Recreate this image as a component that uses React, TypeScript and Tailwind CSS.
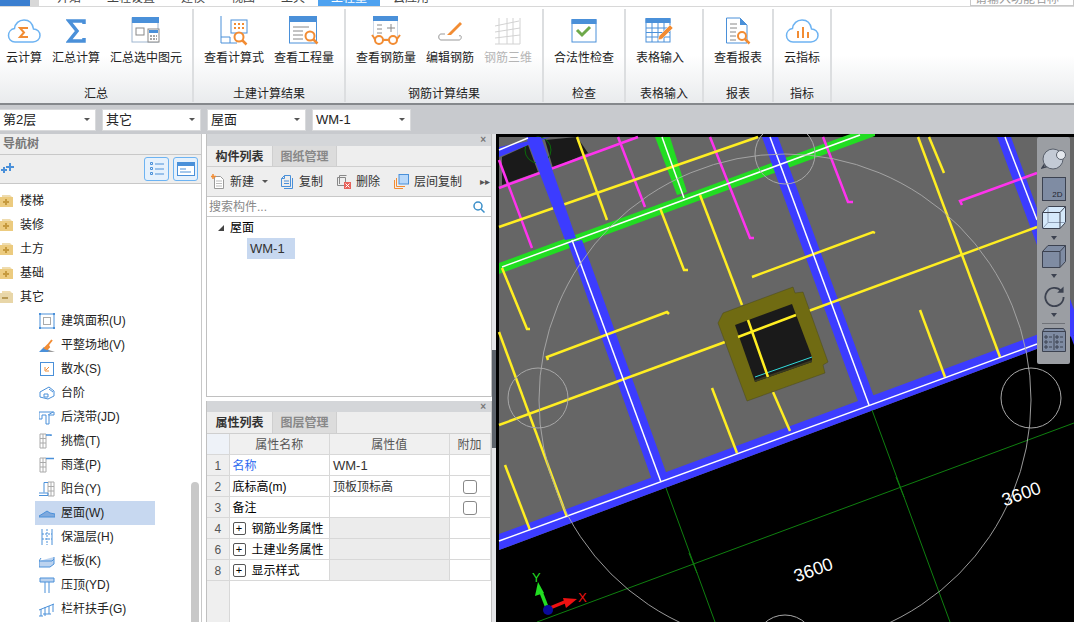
import type { ReactNode } from 'react';

const BLUE = '#4a90d9';
const ORANGE = '#f28c33';
const SKY = '#6db3f2';

function CloudShape({ children }: { children: ReactNode }) {
  return (
    <svg width="34" height="26" viewBox="0 0 34 26" fill="none">
      <path d="M8 24h18c4 0 7-3 7-6.500 0-4-3-6.500-6.500-6.500C25.500 5 21.500 2 17 2c-5 0-9 3.500-9.500 8.500C4 11 1.500 14 1.500 17.500 1.500 21 4 24 8 24z" stroke={SKY} strokeWidth="1.5" />
      {children}
    </svg>
  );
}

const ribbonIcons: Record<string, ReactNode> = {
  cloudSum: (
    <CloudShape>
      <path d="M21 10h-8l4 4.500-4 4.500h8" stroke={ORANGE} strokeWidth="2" />
    </CloudShape>
  ),
  sum: (
    <svg width="20" height="24" viewBox="0 0 20 24" fill="none">
      <path d="M18 5V2H3l8 10-8 10h15v-3" stroke={BLUE} strokeWidth="3.500" />
    </svg>
  ),
  sumSelected: (
    <svg width="30" height="28" viewBox="0 0 30 28" fill="none">
      <rect x="1" y="1" width="26" height="24" fill="#fff" stroke="#9fb6d0" />
      <rect x="1" y="0" width="27" height="6" fill={BLUE} />
      <rect x="5" y="11" width="8" height="7" stroke="#888" />
      <rect x="17" y="12" width="11" height="13" fill="#fff" stroke="#888" />
      <rect x="18" y="13" width="9" height="3" fill={BLUE} />
      <path d="M19 19h7M19 22h7" stroke="#888" strokeWidth="1.500" strokeDasharray="2 1" />
    </svg>
  ),
  formula: (
    <svg width="28" height="30" viewBox="0 0 28 30" fill="none">
      <path d="M1 0v27h16M1 21h9v6" stroke={BLUE} />
      <rect x="11" y="4" width="16" height="13" fill="#fff" stroke={BLUE} />
      <path d="M14 8h2M18 8h2M22 8h2M14 12h2M18 12h2M22 12h2" stroke={ORANGE} strokeWidth="2" />
      <circle cx="19" cy="21" r="4.500" fill="#fff" stroke={ORANGE} strokeWidth="2" />
      <path d="M22 24l4.500 4.500" stroke={ORANGE} strokeWidth="2.500" />
    </svg>
  ),
  quantity: (
    <svg width="30" height="30" viewBox="0 0 30 30" fill="none">
      <rect x="0.500" y="1" width="27" height="26" fill="#fff" stroke={BLUE} />
      <rect x="0" y="0" width="28" height="6" fill={BLUE} />
      <path d="M4 11h16M4 15h10M4 19h10M4 23h10" stroke="#888" />
      <circle cx="21" cy="20" r="4.500" fill="#fff" stroke={ORANGE} strokeWidth="2" />
      <path d="M24 23l4.500 4.500" stroke={ORANGE} strokeWidth="2.500" />
    </svg>
  ),
  rebarView: (
    <svg width="30" height="30" viewBox="0 0 30 30" fill="none">
      <rect x="2.500" y="1" width="24" height="22" fill="#fff" stroke="#cfd9e6" />
      <rect x="2" y="0" width="25" height="5" fill={BLUE} />
      <path d="M6 9h5M6 13h5M6 17h5M16 12h8M20 8v8" stroke="#888" />
      <circle cx="8" cy="24" r="4" fill="#fff" stroke={ORANGE} strokeWidth="2" />
      <circle cx="22" cy="24" r="4" fill="#fff" stroke={ORANGE} strokeWidth="2" />
      <path d="M12 24h6M4 23L1 19M26 23l3-4" stroke={ORANGE} strokeWidth="2" />
    </svg>
  ),
  rebarEdit: (
    <svg width="26" height="26" viewBox="0 0 26 26" fill="none">
      <path d="M8 16H4c-3 0-3 6 0 6h18c3 0 3-6 0-4" stroke="#999" />
      <path d="M10 17l13-13 2 2-11 11z" fill={ORANGE} />
    </svg>
  ),
  rebar3d: (
    <svg width="28" height="28" viewBox="0 0 28 28" fill="none" stroke="#d2d2d2">
      <path d="M5 1v26M13 1v26M26 1v26M19 1v26M1 9l24-5M1 15l25-4M1 21l25-3M1 27h25" />
    </svg>
  ),
  check: (
    <svg width="26" height="24" viewBox="0 0 26 24" fill="none">
      <rect x="1" y="1" width="24" height="22" fill="#fff" stroke={BLUE} />
      <rect x="0.500" y="0" width="25" height="5" fill={BLUE} />
      <path d="M4 11l5 5 8-8" stroke="#6ea94a" strokeWidth="3" transform="translate(2 0)" />
    </svg>
  ),
  table: (
    <svg width="30" height="26" viewBox="0 0 30 26" fill="none">
      <rect x="1" y="1" width="24" height="23" fill="#fff" stroke={BLUE} />
      <rect x="0.500" y="0" width="25" height="5" fill={BLUE} />
      <path d="M1 10h24M1 14.500h24M1 19h24M7 5v19M13 5v19M19 5v19" stroke={BLUE} />
      <path d="M13 22l1-4L25 7l3 3-11 11z" fill={ORANGE} stroke="#fff" strokeWidth="0.500" />
    </svg>
  ),
  report: (
    <svg width="26" height="28" viewBox="0 0 26 28" fill="none">
      <path d="M1.500 1H15l7 7v18H1.500z" fill="#fff" stroke={BLUE} />
      <path d="M15 1v7h7z" fill={BLUE} />
      <path d="M5 7h7M5 11h7M5 15h6M5 19h6M5 23h6" stroke="#888" />
      <circle cx="17" cy="19" r="4" fill="#fff" stroke={ORANGE} strokeWidth="2" />
      <path d="M20 22l4.500 4.500" stroke={ORANGE} strokeWidth="2.500" />
    </svg>
  ),
  cloudIndex: (
    <CloudShape>
      <path d="M13 13v7M18 9v11M23 14v6" stroke={ORANGE} strokeWidth="2" />
    </CloudShape>
  ),
};

const groups = [
  { label: '汇总', width: 'w-[194px]', pad: 'px-[1px]', buttons: [['云计算', 'cloudSum'], ['汇总计算', 'sum'], ['汇总选中图元', 'sumSelected']] },
  { label: '土建计算结果', width: 'w-[152px]', pad: 'px-[5px]', buttons: [['查看计算式', 'formula'], ['查看工程量', 'quantity']] },
  { label: '钢筋计算结果', width: 'w-[198px]', pad: 'px-[5px]', buttons: [['查看钢筋量', 'rebarView'], ['编辑钢筋', 'rebarEdit'], ['钢筋三维', 'rebar3d']] },
  { label: '检查', width: 'w-[82px]', pad: 'px-[5px]', buttons: [['合法性检查', 'check']] },
  { label: '表格输入', width: 'w-[78px]', pad: 'px-[5px]', buttons: [['表格输入', 'table']] },
  { label: '报表', width: 'w-[70px]', pad: 'px-[5px]', buttons: [['查看报表', 'report']] },
  { label: '指标', width: 'w-[58px]', pad: 'px-[5px]', buttons: [['云指标', 'cloudIndex']] },
];

const tabs = ['开始', '工程设置', '建模', '视图', '工具', '工程量', '云应用'];

function TopTabs() {
  return (
    <div className="flex h-[7px] shrink-0 items-end overflow-hidden border-b border-[#d8d8d8] bg-white text-xs leading-4 text-[#444]">
      <div className="mr-[5px] flex h-[6px] w-[39px] shrink-0">
        <div className="h-full w-[30px] bg-[#3b7fd0]" />
        <div className="h-full w-[9px] bg-[#d8d8d8]" />
      </div>
      {tabs.map((tab) => (
        <div key={tab} className={tab === '工程量' ? 'bg-[#4ea2f0] px-[13px] text-white' : 'px-[13px]'}>
          {tab}
        </div>
      ))}
      <div className="ml-auto h-4 w-[104px] border border-[#c8c8c8] pl-1 text-[#999]">请输入功能名称</div>
    </div>
  );
}

function Ribbon() {
  return (
    <div className="flex h-[98px] shrink-0 border-b-2 border-[#85888c] bg-gradient-to-b from-white from-50% to-[#e9ebed] pt-[2px]">
      {groups.map((group) => (
        <div key={group.label} className={`${group.width} mb-px flex shrink-0 flex-col border-r-2 border-[#dcdee0]`}>
          <div className={`flex ${group.pad}`}>
            {group.buttons.map(([label, icon]) => (
              <div key={label} className={`flex flex-col items-center px-[5px] ${label === '钢筋三维' ? 'text-[#b5b5b5]' : ''}`}>
                <div className="flex h-[38px] w-full items-center justify-center pt-[5px]">{ribbonIcons[icon]}</div>
                <div className="mt-px text-xs leading-5 whitespace-nowrap">{label}</div>
              </div>
            ))}
          </div>
          <div className="mt-auto text-center text-xs leading-4">{group.label}</div>
        </div>
      ))}
    </div>
  );
}

function SelectorBar() {
  const selects = [
    { text: '第2层', cls: 'w-[97px] -ml-px' },
    { text: '其它', cls: 'w-[99px]' },
    { text: '屋面', cls: 'w-[99px]' },
    { text: 'WM-1', cls: 'w-[99px]' },
  ];
  return (
    <div className="flex h-[29px] shrink-0 items-center gap-[6px] bg-[#c8cace]">
      {selects.map((s) => (
        <div key={s.text} className={`${s.cls} flex h-[22px] items-center justify-between border border-[#d9dadc] bg-white pr-[5px] pl-[3px] text-[13px] text-[#222]`}>
          <span>{s.text}</span>
          <span className="h-0 w-0 border-x-[3px] border-t-[3px] border-x-transparent border-t-[#555]" />
        </div>
      ))}
    </div>
  );
}

const S = (p: { children: ReactNode }) => (
  <svg width="16" height="16" viewBox="0 0 16 16" fill="none">{p.children}</svg>
);

const treeIcons: Record<string, ReactNode> = {
  area: <S><rect x="1" y="1" width="14" height="14" stroke={BLUE} /><rect x="4.500" y="4.500" width="7" height="7" stroke="#aaa" /><path d="M0 0h2v2H0zM14 0h2v2h-2zM0 14h2v2H0zM14 14h2v2h-2z" fill={BLUE} /></S>,
  site: <S><path d="M0 15l5-5 5 3 1 2z" fill={BLUE} /><path d="M10 13l6 2H9z" fill="#999" /><path d="M6 11l3-3 1 2-2 2zM9 8l4-5" stroke={ORANGE} strokeWidth="2" /></S>,
  apron: <S><rect x="1.500" y="1.500" width="13" height="13" stroke={BLUE} /><path d="M10 6l-3 3M6 6v4h4" stroke={ORANGE} /></S>,
  steps: <S><path d="M1 7l9-5 5 4v5l-6 3-8-2z" stroke={BLUE} /><path d="M5 9h4v3H5zM10 4l4 3" stroke={BLUE} /></S>,
  pour: <S><path d="M0 3h15v3H10v9H7V6H3v4H0zM9 6l5-3" stroke={BLUE} /></S>,
  eave: <S><path d="M1 1h6v14H1zM1 5.500h6M1 10h6M4 1v14" stroke="#aaa" /><path d="M7 2h5v1" stroke={BLUE} strokeWidth="1.500" /></S>,
  canopy: <S><path d="M1 1h6v14H1zM1 5.500h6M1 10h6M4 1v14" stroke="#aaa" /><path d="M7 1.500h8" stroke={BLUE} strokeWidth="1.500" /></S>,
  balcony: <S><path d="M9 1h6v14H9zM9 5.500h6M9 10h6M12 1v14" stroke="#aaa" /><path d="M9 1.500H5v10M0 12h9v2.500H0" stroke={BLUE} /></S>,
  roof: <S><path d="M0 11l5-3 3-2 3 2 5 1v3H0z" fill="#7fa9dd" stroke={BLUE} /></S>,
  insulation: <S><path d="M3 0v16M13 0v16" stroke={BLUE} /><path d="M8 0v16M3 5h10M3 10h10" stroke={BLUE} strokeDasharray="2 1" /></S>,
  parapet: <S><path d="M0 8h13l2-2v-2M0 8v6h11l4-3V6M0 8l2-3" stroke={BLUE} fill="#bcd3ef" /></S>,
  coping: <S><path d="M1 1h14v4H1z" fill="#bcd3ef" stroke={BLUE} /><path d="M6 5v11M10 5v11" stroke={BLUE} /></S>,
  railing: <S><path d="M0 9l15-6M2 8v7M6 6v9M10 5v8M14 3v8M0 15h4M4 13h8" stroke={BLUE} /></S>,
};

const folders = ['楼梯', '装修', '土方', '基础', '其它'];
const items = [
  ['建筑面积(U)', 'area'], ['平整场地(V)', 'site'], ['散水(S)', 'apron'], ['台阶', 'steps'], ['后浇带(JD)', 'pour'],
  ['挑檐(T)', 'eave'], ['雨蓬(P)', 'canopy'], ['阳台(Y)', 'balcony'], ['屋面(W)', 'roof'], ['保温层(H)', 'insulation'],
  ['栏板(K)', 'parapet'], ['压顶(YD)', 'coping'], ['栏杆扶手(G)', 'railing'],
];

function Folder({ open }: { open: boolean }) {
  return (
    <svg width="15" height="14" viewBox="0 0 15 14" className="-ml-px shrink-0">
      <path d="M3 1h8l2 2H3z" fill="#efdcae" />
      <path d="M0 3h14v10H0z" fill={open ? '#e8d6a8' : '#eccb7f'} />
      {open ? <path d="M3 8h6" stroke="#b89a55" strokeWidth="2" /> : <path d="M4 8h6M7 5v6" stroke="#c69a3e" strokeWidth="2" />}
    </svg>
  );
}

function NavTree() {
  return (
    <div className="relative flex h-full w-[202px] shrink-0 flex-col border-r border-[#c8c8c8] bg-white">
      <div className="flex h-[21px] shrink-0 items-center border-b border-[#c8c8c8] bg-[#eeeeee] pl-[3px] text-xs font-bold text-[#777]">导航树</div>
      <div className="flex h-[29px] shrink-0 items-center justify-between border-b border-[#c8c8c8] bg-[#eeeeee] pr-[3px] pl-px">
        <svg width="13" height="12" viewBox="0 0 13 12"><path d="M8 0h2v3h3v2h-3v3H8V5H5V3h3zM2 4h2v2h2v2H4v2H2V8H0V6h2z" fill={BLUE} /></svg>
        <div className="flex gap-[4px]">
          <div className="flex h-6 w-[25px] items-center justify-center rounded-[3px] border border-[#6db3f2] bg-[#e6f1fc]">
            <svg width="14" height="14" viewBox="0 0 14 14" fill="none" stroke={BLUE}><path d="M5 2h9M5 7h9M5 12h9M0.500 0.500h2v2h-2zM0.500 5.500h2v2h-2zM0.500 10.500h2v2h-2z" /></svg>
          </div>
          <div className="flex h-6 w-[25px] items-center justify-center rounded-[3px] border border-[#6db3f2] bg-[#e6f1fc]">
            <svg width="18" height="14" viewBox="0 0 18 14" fill="none"><rect x="0.500" y="0.500" width="17" height="13" fill="#fff" stroke={BLUE} /><rect width="18" height="4" fill={BLUE} /><path d="M3 7h6M3 10h11" stroke={BLUE} /></svg>
          </div>
        </div>
      </div>
      <div className="flex-1 overflow-hidden pt-[5px] text-xs text-[#222]">
        {folders.map((f) => (
          <div key={f} className="flex h-6 items-center gap-[6px]">
            <Folder open={f === '其它'} />
            <span>{f}</span>
          </div>
        ))}
        {items.map(([label, icon]) => (
          <div key={label} className={`ml-[35px] flex h-6 w-[120px] items-center gap-[6px] pl-[4px] ${label === '屋面(W)' ? 'bg-[#c7d8f0]' : ''}`}>
            {treeIcons[icon]}
            <span className="whitespace-nowrap">{label}</span>
          </div>
        ))}
      </div>
      <div className="absolute top-[348px] right-[2px] bottom-0 w-2 rounded-t bg-[#c8c8c8]" />
    </div>
  );
}

function PanelTabs({ active, other, titleH, tabH }: { active: string; other: string; titleH: string; tabH: string }) {
  return (
    <>
      <div className={`flex ${titleH} shrink-0 items-center justify-end bg-[#d4d6d9] pr-[5px] text-[10px] leading-none font-bold text-[#777]`}>×</div>
      <div className={`flex ${tabH} shrink-0 border-b border-[#cfcfcf] bg-[#eeeeee] text-xs`}>
        <div className="flex w-[65px] items-center justify-center pt-px font-bold text-[#333]">{active}</div>
        <div className="flex w-[65px] items-center justify-center border-x border-[#cfcfcf] bg-[#dcdcdc] pt-px font-bold text-[#888]">{other}</div>
      </div>
    </>
  );
}

function ComponentList() {
  return (
    <div className="flex h-[263px] shrink-0 flex-col border-x border-b border-[#c0c0c0] bg-white text-xs text-[#333]">
      <PanelTabs active="构件列表" other="图纸管理" titleH="h-[12px]" tabH="h-[21px]" />
      <div className="flex h-[30px] shrink-0 items-center border-b border-[#c8c8c8] bg-[#eeeeee] pl-[4px]">
        <svg width="14" height="15" viewBox="0 0 14 15" fill="none"><path d="M3.500 2.500h6l3 3v9h-9z" fill="#fff" stroke="#999" /><path d="M5 7h6M5 9.500h6M5 12h6" stroke="#bbb" /><path d="M2 0v5M0 2.500h5" stroke={ORANGE} strokeWidth="1.500" /></svg>
        <span className="ml-[5px] pt-px">新建</span>
        <span className="mx-[8px] h-0 w-0 border-x-[3px] border-t-[3px] border-x-transparent border-t-[#555]" />
        <svg width="12" height="14" viewBox="0 0 12 14" fill="none" className="ml-[5px]"><path d="M3.500 0.500h6v11h-9v-8zM0.500 3.500h3v-3" stroke={BLUE} /><path d="M3 6h5M3 8.500h5" stroke={BLUE} /><path d="M3 13.500h8.500V3" stroke={BLUE} /></svg>
        <span className="ml-[6px] pt-px">复制</span>
        <svg width="14" height="14" viewBox="0 0 14 14" fill="none" className="ml-[14px]"><path d="M2.500 9V0.500h7M0.500 2.500h8v8h-8z" stroke="#888" /><rect x="7" y="7" width="7" height="7" fill="#e8625a" /><path d="M8.500 8.500l4 4M12.500 8.500l-4 4" stroke="#fff" /></svg>
        <span className="ml-[5px] pt-px">删除</span>
        <svg width="15" height="15" viewBox="0 0 15 15" fill="none" className="ml-[14px]"><path d="M0.500 6v8.500H9M2.500 4v8.500H11" stroke={ORANGE} /><rect x="5" y="0.500" width="9.500" height="9.500" fill="#b8d8fa" stroke={BLUE} /></svg>
        <span className="ml-[5px] pt-px">层间复制</span>
        <span className="ml-auto pr-[1px] text-[10px] leading-none text-[#555]">▸▸</span>
      </div>
      <div className="flex h-[20px] shrink-0 items-center justify-between border-b border-[#c8c8c8] pr-[6px] pl-[2px] text-[#888]">
        <span className="pt-px">搜索构件...</span>
        <svg width="12" height="12" viewBox="0 0 12 12" fill="none" stroke="#3b8fc9" strokeWidth="1.500"><circle cx="5" cy="5" r="4" /><path d="M8 8l3.500 3.500" /></svg>
      </div>
      <div className="flex h-[21px] items-center pl-[11px] text-black">
        <span className="h-0 w-0 border-b-[6px] border-l-[6px] border-b-[#444] border-l-transparent" />
        <span className="ml-[6px]">屋面</span>
      </div>
      <div className="ml-[40px] flex h-[21px] w-[48px] items-center bg-[#c7d8f0] pl-[3px] text-[13px]">WM-1</div>
    </div>
  );
}

const cols = 'grid grid-cols-[22.500px_100.500px_119.500px_41px]';
const cell = 'flex items-center border-r border-b border-[#d8d8d8] pt-px';

const rows = [
  { n: '1', name: '名称', value: 'WM-1', blue: true },
  { n: '2', name: '底标高(m)', value: '顶板顶标高', box: true },
  { n: '3', name: '备注', value: '', box: true },
  { n: '4', name: '钢筋业务属性', group: true },
  { n: '6', name: '土建业务属性', group: true },
  { n: '8', name: '显示样式', group: true },
];

function PropertyList() {
  return (
    <div className="flex min-h-0 flex-1 flex-col border-x border-[#c0c0c0] bg-white text-xs text-[#333]">
      <PanelTabs active="属性列表" other="图层管理" titleH="h-[11px]" tabH="h-[22px]" />
      <div className="relative min-h-0 flex-1">
        <div className={`${cols} h-[21px] bg-[#f0f0f0] text-[#555]`}>
          <div className={`${cell} bg-[#eef2f8]`} />
          <div className={`${cell} justify-center`}>属性名称</div>
          <div className={`${cell} justify-center`}>属性值</div>
          <div className={`${cell} justify-center`}>附加</div>
        </div>
        {rows.map((r) => (
          <div key={r.n} className={`${cols} h-[21px]`}>
            <div className={`${cell} justify-center bg-[#efefef] text-[#555]`}>{r.n}</div>
            <div className={`${cell} pl-[3px] ${r.blue ? 'text-[#2f6bf0]' : 'text-black'}`}>
              {r.group && (
                <span className="mr-[6px] flex h-[13px] w-[13px] items-center justify-center rounded-[2px] border border-[#555] text-[11px] leading-none">+</span>
              )}
              {r.name}
            </div>
            <div className={`${cell} pl-[3px] ${r.group ? 'bg-[#ececec]' : ''} ${r.value === 'WM-1' ? 'text-[13px]' : ''}`}>{r.value}</div>
            <div className={`${cell} justify-center`}>
              {r.box && <span className="h-[14px] w-[14px] rounded-[3px] border border-[#888]" />}
            </div>
          </div>
        ))}
        <div className="absolute top-[147px] bottom-0 left-0 w-[22.500px] border-r border-[#d8d8d8] bg-[#efefef]" />
      </div>
    </div>
  );
}

// drawing data in page pixels, the svg viewBox starts at the canvas corner
const YELLOW = '#ffee22';
const MAGENTA = '#ff33ee';
const magentaLines = [
  [499, 188, 638, 137], [499, 160, 532, 248], [618, 137, 645, 207], [710, 137, 750, 238, 754, 238],
  [823, 137, 848, 202, 853, 202], [1037, 173, 960, 201, 962, 205],
];
const yellowLines = [
  [577, 137, 607, 220], [499, 227, 758, 137], [660, 208, 684, 270, 688, 270], [700, 195, 742, 305],
  [502, 268, 527, 329, 530, 329], [752, 277, 873, 232, 875, 233], [548, 360, 547, 357, 667, 312, 669, 314],
  [499, 425, 725, 342], [738, 337, 1037, 227], [918, 137, 1000, 357],
  [929, 137, 944, 173], [920, 310, 945, 377], [499, 332, 567, 517], [505, 465, 530, 530], [712, 388, 737, 453],
  [773, 392, 790, 431],
];
const whiteLines = [
  [499, 150, 528, 138], [502, 267, 860, 135], [662, 137, 684, 198], [572, 240, 661, 482],
  [770, 137, 869, 405], [1005, 137, 1037, 220], [499, 541, 1037, 344],
];
const gridLines = [
  [666, 488, 715, 622], [872, 410, 950, 622], [537, 622, 1074, 423], [689, 553, 697, 573], [896, 477, 904, 497],
];

function ViewCube({ fill, see }: { fill: string; see?: boolean }) {
  return (
    <svg width="24" height="23" viewBox="0 0 24 23" fill="none" stroke="#3c4250">
      <path d="M0.500 6.500l5.500-6h17.500v16l-5.500 6h-17.500z" fill={fill} />
      {see && <path d="M6 0.500v16h17.500M6 16.500l-5.500 6" stroke="#8fa0b8" />}
      <path d="M0.500 6.500h17.500v16M18 6.500l5.500-6" />
    </svg>
  );
}

const SmallCaret = () => <span className="h-0 w-0 border-x-[3px] border-t-[4px] border-x-transparent border-t-[#3c4250]" />;

function ViewToolbar() {
  return (
    <div className="absolute top-[3px] right-[4px] flex h-[227px] w-[33px] flex-col items-center rounded-[2px] bg-[#9b9ea3] pt-[11px]">
      <svg width="26" height="22" viewBox="0 0 26 22">
        <path d="M5 14L1 20l7-2" fill="none" stroke="#3c4250" strokeWidth="1.500" />
        <circle cx="12" cy="11" r="10" fill="#c3cad5" stroke="#59606c" />
        <circle cx="20" cy="7" r="4.500" fill="#e4e8ee" stroke="#59606c" />
      </svg>
      <div className="mt-[7px] flex h-6 w-6 items-end justify-end border border-[#3c4250] bg-[#7f8ca3] pr-[2px] text-[8px] leading-[10px] text-[#1e2430]">2D</div>
      <div className="mt-[5px] flex"><ViewCube fill="#d5e9fb" see /></div>
      <div className="mt-[7px] flex"><SmallCaret /></div>
      <div className="mt-[5px] flex"><ViewCube fill="#7f8ca3" /></div>
      <div className="mt-[6px] flex"><SmallCaret /></div>
      <svg width="24" height="21" viewBox="0 0 24 23" fill="none" stroke="#3c4250" strokeWidth="2" className="mt-[8px]">
        <path d="M20 5.500A10 10 0 1 0 22.500 12" />
        <path d="M22.500 0.500v7h-7z" fill="#3c4250" stroke="none" />
      </svg>
      <div className="mt-[6px] flex"><SmallCaret /></div>
      <div className="mt-[6px] h-px w-[23px] bg-[#6f7278]" />
      <svg width="24" height="24" viewBox="0 0 24 24" fill="#7f8ca3" stroke="#3c4250" className="mt-[4px]">
        <path d="M0.500 3.500l2-3h19l2 3v20h-23z" />
        <path d="M0.500 3.500h23M12 6v16M3 8h2v2H3zM7 9h3M14 8h2v2h-2zM18 9h3M3 13h2v2H3zM7 14h3M14 13h2v2h-2zM18 14h3M3 18h2v2H3zM7 19h3M14 18h2v2h-2zM18 19h3" fill="none" />
      </svg>
    </div>
  );
}

function Canvas() {
  return (
    <div className="relative h-full flex-1 overflow-hidden bg-black">
      <svg className="block h-full w-full" viewBox="496 134 578 488" fill="none">
        <path d="M499 137H1074V335L499 550z" fill="#666666" />
        <path d="M502 157l26-12 10 27-36 13zM545 140l32-3 11 16-35 15z" fill="#1a1a1a" />
        <circle cx="538" cy="150" r="13" stroke="#0a6b0a" />
        {/* bands under the thin lines */}
        <path d="M499 263L875 125V136L499 274zM655 137h15l17 55-10 3z" fill="#22dd22" />
        <path d="M568 243l14-3 85 235-15 5zM762 137h16l99 268-15 7zM997 137h14l74 203-11 5zM499 534L1074 321V335L499 550z" fill="#3c3cff" />
        {magentaLines.map((l, i) => (
          <polyline key={i} points={l.join(' ')} stroke={MAGENTA} strokeWidth="2.500" />
        ))}
        {yellowLines.map((l, i) => (
          <polyline key={i} points={l.join(' ')} stroke={YELLOW} strokeWidth="2.500" />
        ))}
        <path d="M499 147l51-10-22 8-29 12zM526 137h15l35 101-11 2z" fill="#3c3cff" />
        {whiteLines.map((l, i) => (
          <polyline key={i} points={l.join(' ')} stroke="#ffffff" strokeWidth="1.500" />
        ))}
        {/* opening in the roof */}
        <path d="M723 313l70-26 2 6 8-1 25 70-5 3 2 8-78 28-29-78z" fill="#706b12" stroke="#4a4a18" strokeWidth="0.500" />
        <path d="M735 325l57-21 20 53v5l-57 20z" fill="#1a1a1a" />
        <path d="M755 380l57-20v2l-57 20z" fill="#3a3a20" />
        <path d="M755 377l57-20" stroke="#33dddd" />
        <path d="M738 337l58-22M748 320l20 57" stroke={YELLOW} strokeWidth="2.500" />
        {gridLines.map((l, i) => (
          <polyline key={i} points={l.join(' ')} stroke="#0f7f0f" strokeWidth="1" />
        ))}
        <circle cx="785" cy="400" r="246" stroke="#aaaaaa" strokeOpacity="0.900" />
        <circle cx="538" cy="398" r="30" stroke="#a8a8a8" />
        <circle cx="785" cy="154" r="30" stroke="#a8a8a8" />
        <circle cx="1031" cy="398" r="30" stroke="#a8a8a8" />
        <circle cx="785" cy="645" r="30" stroke="#a8a8a8" />
        <text x="813" y="576" fill="#ffffff" fontSize="18" textAnchor="middle" fontFamily="Liberation Sans" transform="rotate(-20 813 569)">3600</text>
        <text x="1021" y="500" fill="#ffffff" fontSize="18" textAnchor="middle" fontFamily="Liberation Sans" transform="rotate(-20 1021 493)">3600</text>
        {/* axis marker */}
        <path d="M548 610l-7-18" stroke="#22dd22" strokeWidth="3.500" />
        <path d="M538 582l6 11-9 3z" fill="#22dd22" />
        <path d="M550 608l17-7" stroke="#ee1111" strokeWidth="3.500" />
        <path d="M577 599l-11 9-3-10z" fill="#ee1111" />
        <circle cx="548" cy="610" r="5" fill="#0a0a9a" />
        <text x="532" y="582" fill="#22dd22" fontSize="13" fontFamily="Liberation Sans">Y</text>
        <text x="578" y="602" fill="#ee1111" fontSize="13" fontFamily="Liberation Sans">X</text>
      </svg>
      <ViewToolbar />
    </div>
  );
}

export default function App() {
  return (
    <div className="flex h-[622px] w-[1074px] flex-col overflow-hidden bg-white font-['Liberation_Sans','Noto_Sans_CJK_SC',sans-serif] text-[#222]">
      <TopTabs />
      <Ribbon />
      <SelectorBar />
      <div className="flex min-h-0 flex-1">
        <NavTree />
        <div className="flex h-full w-[294px] shrink-0 bg-white pl-[4px]">
          <div className="flex w-[286px] shrink-0 flex-col gap-[4px]">
            <ComponentList />
            <PropertyList />
          </div>
          <div className="relative w-[4px] shrink-0 bg-[#e4e5e7]">
            <div className="absolute top-[216px] h-[98px] w-full bg-[#5d636b]" />
          </div>
        </div>
        <Canvas />
      </div>
    </div>
  );
}
